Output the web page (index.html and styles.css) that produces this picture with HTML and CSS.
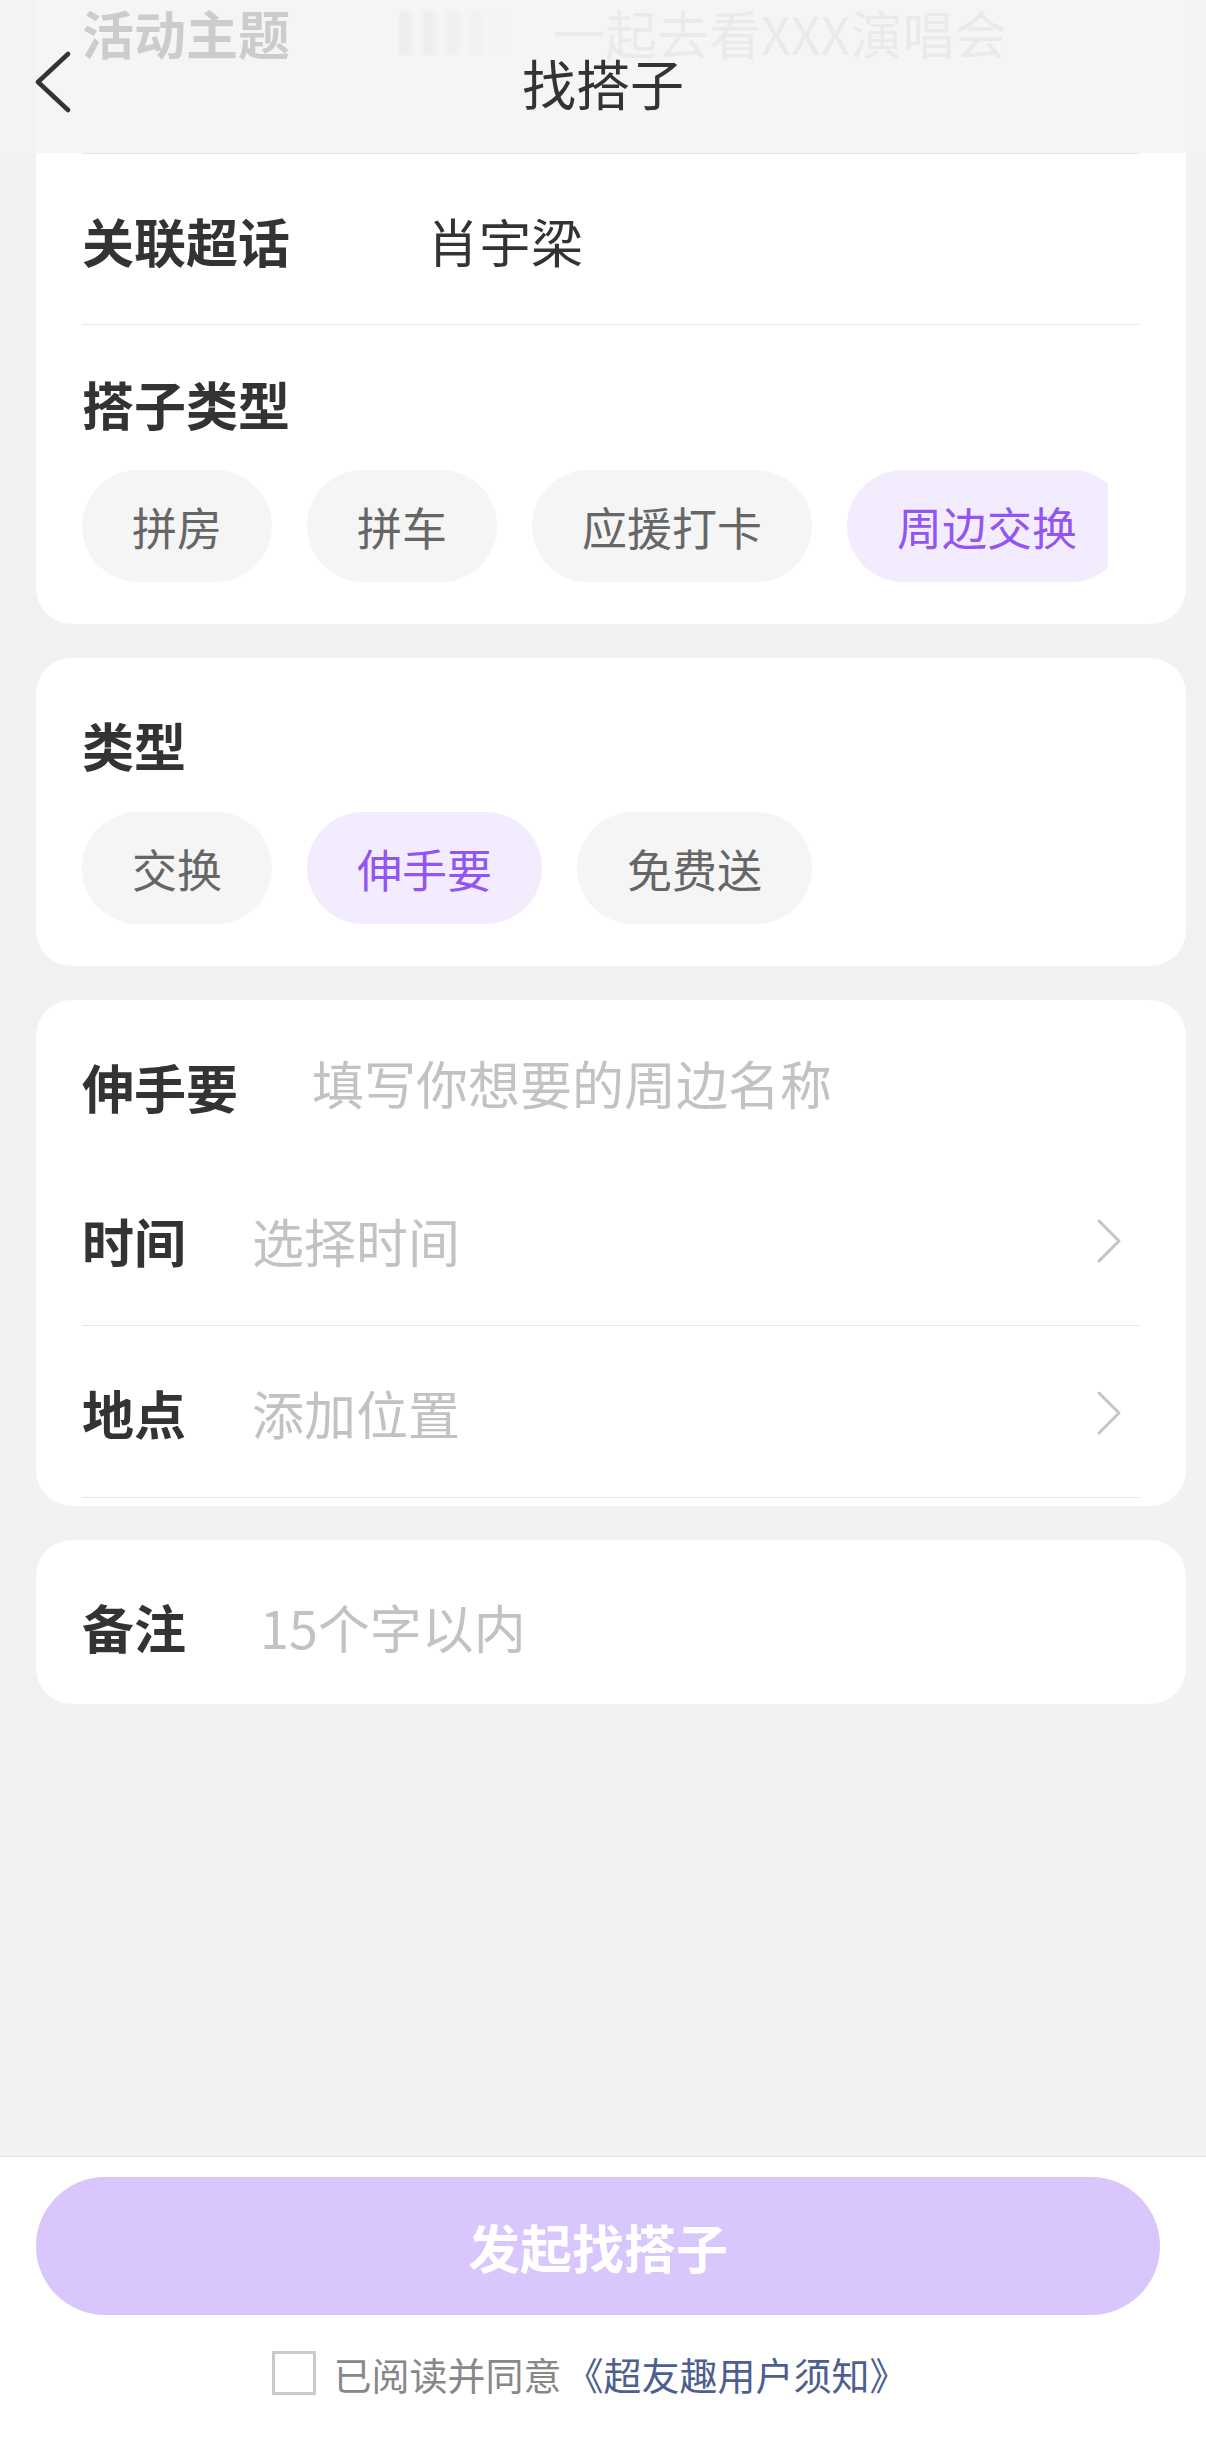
FILE: index.html
```html
<!DOCTYPE html>
<html lang="zh-CN">
<head>
    <meta charset="UTF-8">
    <meta name="viewport" content="width=device-width, initial-scale=1.0">
    <title>找搭子</title>
    <link rel="stylesheet" href="styles.css">
</head>
<body>
    <div class="screen">
        <header class="topbar">
            <button class="back-btn" aria-label="返回">
                <svg width="40" height="64" viewBox="0 0 40 64">
                    <path d="M34 3 L4 31 L34 59" fill="none" stroke="#333" stroke-width="4.5" stroke-linecap="round" stroke-linejoin="round"/>
                </svg>
            </button>
            <h1 class="title">找搭子</h1>
        </header>

        <main class="content">
            <section class="card card-first">
                <div class="row row-topic">
                    <span class="label">活动主题</span>
                    <span class="topic-blur"></span>
                    <span class="topic-value">一起去看XXX演唱会</span>
                </div>
                <div class="row row-link">
                    <span class="label">关联超话</span>
                    <span class="value">肖宇梁</span>
                </div>
                <div class="group group-inline">
                    <div class="label">搭子类型</div>
                    <div class="chips chips-clip">
                        <span class="chip">拼房</span>
                        <span class="chip">拼车</span>
                        <span class="chip">应援打卡</span>
                        <span class="chip active">周边交换</span>
                        <span class="chip">其他</span>
                    </div>
                </div>
            </section>

            <section class="card">
                <div class="group">
                    <div class="label">类型</div>
                    <div class="chips">
                        <span class="chip">交换</span>
                        <span class="chip active">伸手要</span>
                        <span class="chip">免费送</span>
                    </div>
                </div>
            </section>

            <section class="card card-fields">
                <div class="field field-first">
                    <span class="label">伸手要</span>
                    <span class="placeholder ph-wide">填写你想要的周边名称</span>
                </div>
                <div class="field field-time">
                    <span class="label">时间</span>
                    <span class="placeholder">选择时间</span>
                    <svg class="arrow" width="28" height="46" viewBox="0 0 28 46">
                        <path d="M4 3 L24 23 L4 43" fill="none" stroke="#c4c4c4" stroke-width="3" stroke-linecap="round" stroke-linejoin="round"/>
                    </svg>
                </div>
                <div class="field field-place">
                    <span class="label">地点</span>
                    <span class="placeholder">添加位置</span>
                    <svg class="arrow" width="28" height="46" viewBox="0 0 28 46">
                        <path d="M4 3 L24 23 L4 43" fill="none" stroke="#c4c4c4" stroke-width="3" stroke-linecap="round" stroke-linejoin="round"/>
                    </svg>
                </div>
            </section>

            <section class="card card-note">
                <div class="field">
                    <span class="label">备注</span>
                    <span class="placeholder ph-wide">15个字以内</span>
                </div>
            </section>
        </main>

        <footer class="bottom-bar">
            <button class="submit-btn">发起找搭子</button>
            <div class="agree">
                <span class="checkbox"></span>
                <span class="agree-text">已阅读并同意</span>
                <span class="agree-link">《超友趣用户须知》</span>
            </div>
        </footer>
    </div>
</body>
</html>
```

FILE: styles.css
```css
* {
    box-sizing: border-box;
}
body {
    margin: 0;
    background-color: #f2f2f2;
    font-family: "Noto Sans CJK SC", "Noto Sans", sans-serif;
    color: #333333;
}
.screen {
    position: relative;
    display: flex;
    flex-direction: column;
    width: 1206px;
    height: 2444px;
    overflow: hidden;
}

/* top bar sits over the scrolled content */
.topbar {
    position: absolute;
    top: 0;
    left: 0;
    right: 0;
    z-index: 2;
    height: 153px;
    padding-top: 12px;
    display: flex;
    align-items: center;
    justify-content: center;
    background-color: rgba(243, 243, 243, 0.8);
}
.back-btn {
    position: absolute;
    left: 34px;
    top: 51px;
    width: 40px;
    height: 64px;
    padding: 0;
    border: none;
    background: none;
}
.back-btn svg {
    display: block;
}
.title {
    margin: 0;
    font-size: 54px;
    font-weight: 400;
    line-height: 70px;
    color: #333333;
}

.content {
    flex: 1;
    padding: 0 20px 0 36px;
}
.card {
    background-color: #ffffff;
    border-radius: 36px;
    padding: 0 47px 0 46px;
    margin-top: 34px;
}
.card-first {
    margin-top: -60px;
}
.label {
    font-size: 52px;
    font-weight: 700;
    line-height: 70px;
    color: #333333;
    white-space: nowrap;
}

.row {
    display: flex;
    align-items: center;
    border-bottom: 1px solid #e6e6e6;
}
.row-topic {
    align-items: flex-start;
    padding-top: 58px;
    padding-bottom: 85px;
}
.topic-blur {
    width: 130px;
    height: 46px;
    margin: 12px 0 0 109px;
    background: repeating-linear-gradient(90deg, #b5b5b5 0 12px, transparent 12px 24px);
    filter: blur(3px);
    -webkit-mask-image: linear-gradient(90deg, #000 20%, transparent 100%);
    opacity: 0.6;
}
.topic-value {
    margin-left: 24px;
    font-size: 52px;
    line-height: 70px;
    color: #c8c8c8;
}
.row-link {
    padding: 52px 0 48px;
}
.value {
    margin-left: 137px;
    font-size: 52px;
    line-height: 70px;
    color: #333333;
}

.group {
    padding: 52px 0 42px;
}
.group-inline {
    padding-top: 44px;
}
.chips {
    display: flex;
    gap: 35px;
    margin-top: 32px;
}
.chips-clip {
    margin-top: 31px;
    margin-right: 31px;
    overflow: hidden;
}
.chip {
    flex-shrink: 0;
    display: flex;
    align-items: center;
    height: 112px;
    padding: 0 50px;
    border-radius: 56px;
    background-color: #f5f5f5;
    font-size: 45px;
    color: #666666;
}
.chip.active {
    background-color: #f3ecff;
    color: #9255f2;
}

.field {
    display: flex;
    align-items: center;
    padding: 52px 0 42px;
}
.card-fields {
    padding-bottom: 8px;
}
.field-first {
    padding: 52px 0 35px;
}
.field-time {
    padding: 49px 0;
    border-bottom: 1px solid #e6e6e6;
}
.field-place {
    padding: 52px 0 49px;
    border-bottom: 1px solid #e6e6e6;
}
.placeholder {
    margin-left: 66px;
    font-size: 52px;
    line-height: 70px;
    color: #c2c2c2;
}
.ph-wide {
    margin-left: 74px;
}
.field-first .placeholder {
    position: relative;
    top: -4px;
}
.arrow {
    margin-left: auto;
    margin-right: 16px;
}

.bottom-bar {
    height: 288px;
    border-top: 1px solid #e4e4e4;
    background-color: #ffffff;
    padding-top: 20px;
}
.submit-btn {
    display: block;
    width: 1124px;
    height: 138px;
    margin-left: 36px;
    border: none;
    border-radius: 69px;
    background-color: #d8c6fc;
    color: #ffffff;
    font-family: inherit;
    font-size: 52px;
    font-weight: 700;
}
.agree {
    display: flex;
    align-items: center;
    justify-content: center;
    margin-top: 36px;
    padding-right: 26px;
    height: 44px;
    font-size: 38px;
}
.checkbox {
    width: 44px;
    height: 44px;
    border: 3px solid #cacaca;
    margin-right: 17px;
}
.agree-text {
    color: #888888;
}
.agree-link {
    margin-left: 4px;
    color: #4d5f8f;
}
```
